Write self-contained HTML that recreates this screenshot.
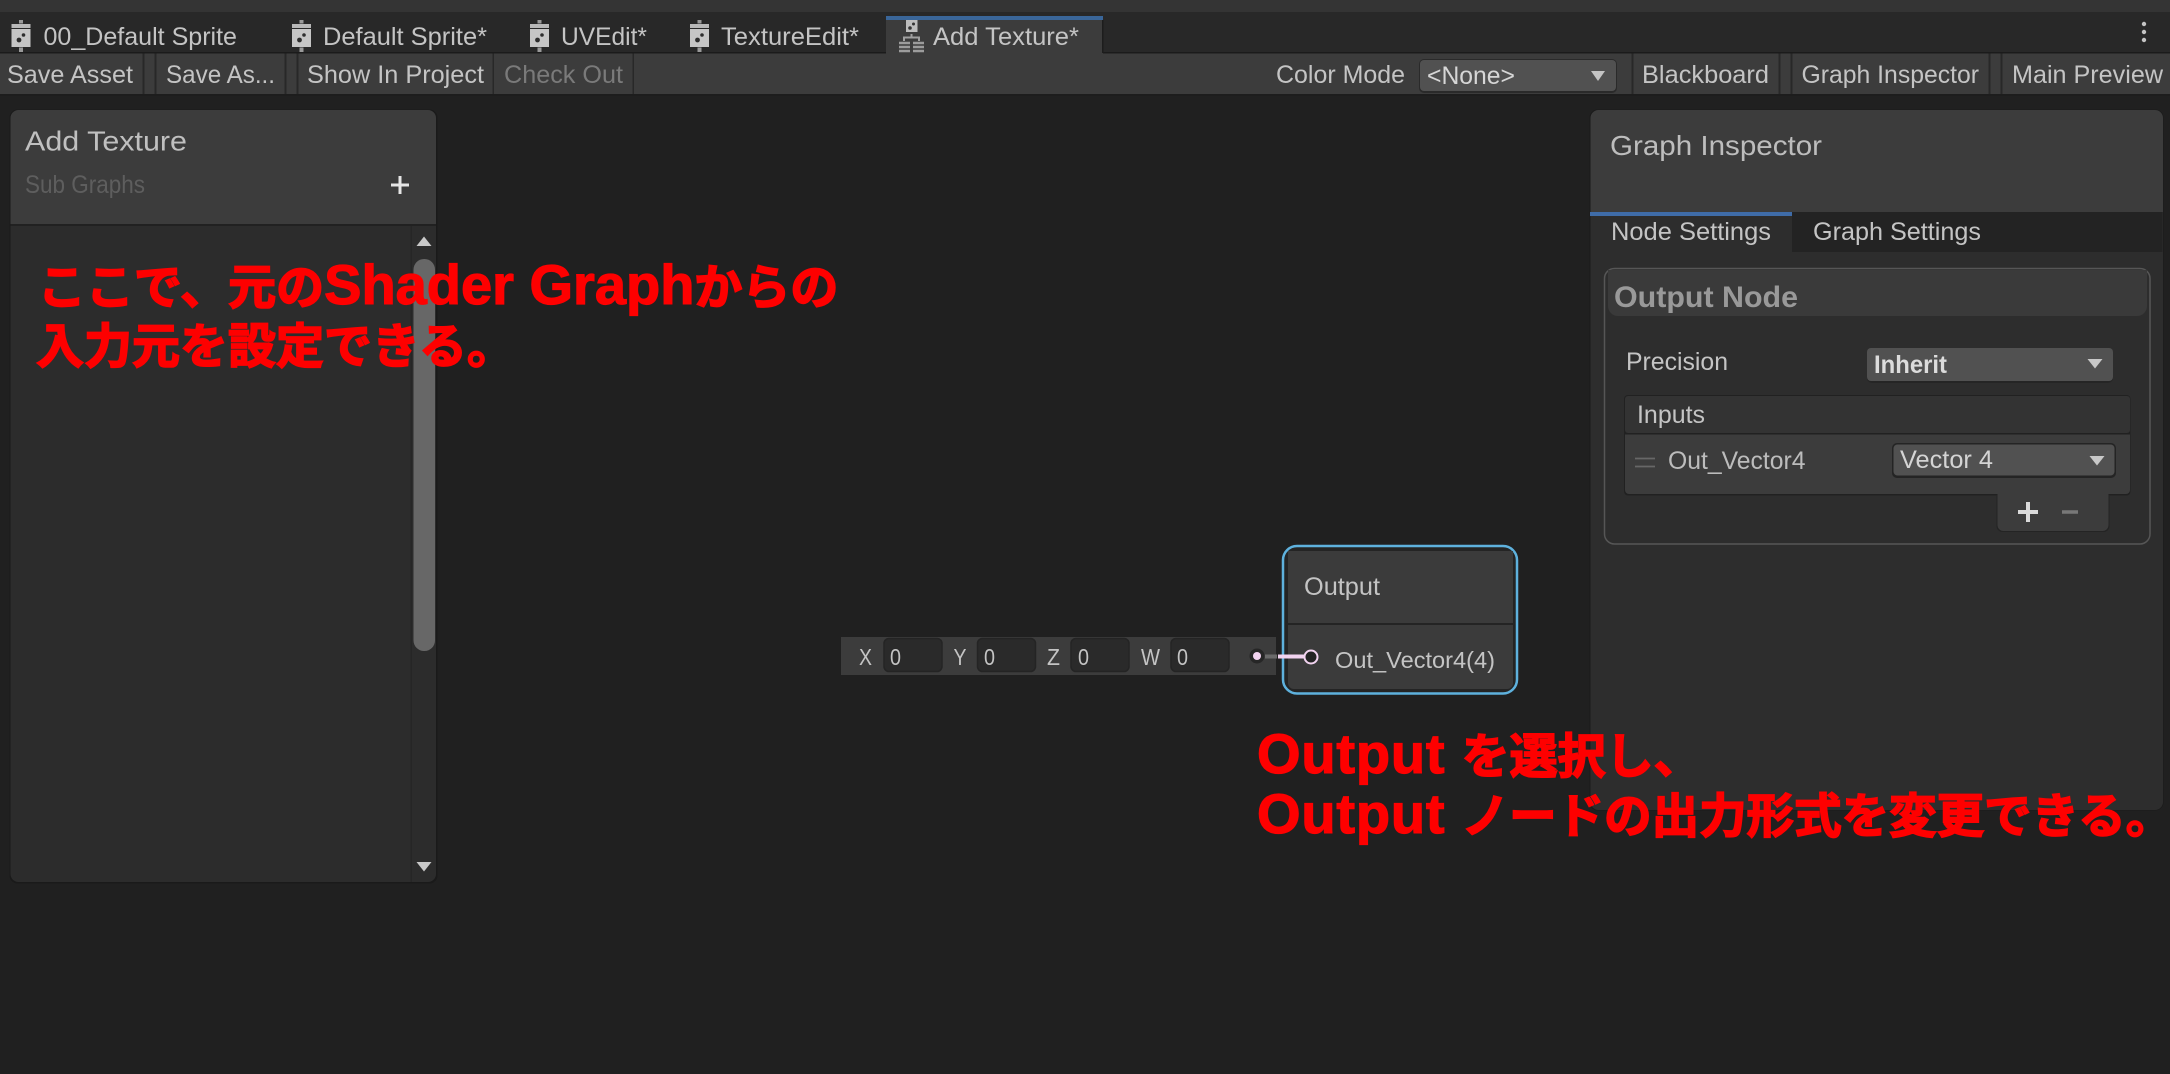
<!DOCTYPE html>
<html lang="ja"><head><meta charset="utf-8"><title>Add Texture</title>
<style>
html,body{margin:0;padding:0;background:#202020;width:2170px;height:1074px;overflow:hidden}
svg{display:block;position:absolute;left:0;top:0}
text{font-family:"Liberation Sans","Noto Sans CJK JP",sans-serif;fill:#c4c4c4}
.t{font-size:25px}
.h{font-size:28px}
.n{font-size:23px}
.r{font-size:48px;font-weight:700;fill:#fe0000;stroke:#fe0000;stroke-width:1.7px}
.l{font-size:56px;stroke-width:1.2px}
.o{letter-spacing:.8px}
</style></head><body>
<svg width="2170" height="1074" viewBox="0 0 2170 1074" xmlns="http://www.w3.org/2000/svg">
<defs>
<g id="ic">
<rect x="-2" y="0" width="4" height="3.5" fill="#9a9a9a"/>
<rect x="-9.5" y="4" width="19" height="4" fill="#b8b8b8"/>
<rect x="-9.5" y="9" width="19" height="18" fill="#c6c6c6"/>
<rect x="-2" y="27.5" width="4" height="4.5" fill="#9a9a9a"/>
<circle cx="2.5" cy="15" r="1.8" fill="#2e2e2e"/><circle cx="-2" cy="20" r="2.4" fill="#2e2e2e"/>
</g>
</defs>
<rect width="2170" height="1074" fill="#202020"/>
<!-- top strip -->
<rect width="2170" height="12" fill="#343434"/>
<rect y="12" width="2170" height="41" fill="#282828"/>
<rect y="52" width="2170" height="1.5" fill="#1b1b1b"/>
<!-- active tab -->
<rect x="886" y="16" width="217" height="38" fill="#3c3c3c"/>
<rect x="886" y="16" width="217" height="4" fill="#3a6699"/>
<rect x="1102" y="20" width="1.5" height="33" fill="#1d1d1d"/>
<use href="#ic" x="21" y="20"/><use href="#ic" x="301.5" y="20"/><use href="#ic" x="539.5" y="20"/><use href="#ic" x="699.5" y="20"/>
<!-- active tab icon -->
<rect x="906" y="20" width="11.5" height="12" fill="#bdbdbd"/>
<circle cx="913.5" cy="24" r="1.5" fill="#333"/><circle cx="910" cy="28" r="1.8" fill="#333"/>
<path d="M911.5 34v3M904 41v-3.5h15V41" fill="none" stroke="#a0a0a0" stroke-width="2"/>
<path d="M899 43h11M899 47h11M899 51h11M913 43h11M913 47h11M913 51h11" fill="none" stroke="#9c9c9c" stroke-width="2.6"/>
<g style="fill:#c8c8c8">
<text class="t" x="43.5" y="45" textLength="193.5" lengthAdjust="spacingAndGlyphs">00_Default Sprite</text>
<text class="t" x="323" y="45" textLength="164" lengthAdjust="spacingAndGlyphs">Default Sprite*</text>
<text class="t" x="561" y="45" textLength="86" lengthAdjust="spacingAndGlyphs">UVEdit*</text>
<text class="t" x="721" y="45" textLength="138" lengthAdjust="spacingAndGlyphs">TextureEdit*</text>
<text class="t" x="933" y="45" textLength="146" lengthAdjust="spacingAndGlyphs">Add Texture*</text>
</g>
<!-- three dots -->
<circle cx="2144" cy="24" r="2.2" fill="#c4c4c4"/><circle cx="2144" cy="32" r="2.2" fill="#c4c4c4"/><circle cx="2144" cy="40" r="2.2" fill="#c4c4c4"/>
<!-- toolbar -->
<rect y="53.5" width="2170" height="40.5" fill="#3c3c3c"/>
<rect y="94" width="2170" height="2" fill="#1d1d1d"/>
<g fill="#282828">
<rect x="142.5" y="53.5" width="2" height="40.5"/><rect x="154.5" y="53.5" width="2" height="40.5"/>
<rect x="284.5" y="53.5" width="2" height="40.5"/><rect x="296.5" y="53.5" width="2" height="40.5"/>
<rect x="492.5" y="53.5" width="1.5" height="40.5"/><rect x="632.5" y="53.5" width="1.5" height="40.5"/>
<rect x="1631.5" y="53.5" width="2" height="40.5"/><rect x="1778.5" y="53.5" width="2" height="40.5"/>
<rect x="1790.5" y="53.5" width="2" height="40.5"/><rect x="1988.5" y="53.5" width="2" height="40.5"/>
<rect x="2000.5" y="53.5" width="2" height="40.5"/>
</g>
<text class="t" x="7" y="83" textLength="126" lengthAdjust="spacingAndGlyphs">Save Asset</text>
<text class="t" x="166" y="83" textLength="109" lengthAdjust="spacingAndGlyphs">Save As...</text>
<text class="t" x="307" y="83" textLength="177" lengthAdjust="spacingAndGlyphs">Show In Project</text>
<text class="t" x="504" y="83" textLength="119" lengthAdjust="spacingAndGlyphs" style="fill:#7a7a7a">Check Out</text>
<text class="t" x="1276" y="83" textLength="129" lengthAdjust="spacingAndGlyphs">Color Mode</text>
<rect x="1419" y="59" width="198" height="34" rx="5" fill="#2a2a2a"/>
<rect x="1420" y="60" width="196" height="31" rx="4" fill="#515151"/>
<text class="t" x="1427" y="84" textLength="88" lengthAdjust="spacingAndGlyphs" style="fill:#d6d6d6">&lt;None&gt;</text>
<path d="M1591 71h14l-7 10z" fill="#c4c4c4"/>
<text class="t" x="1642" y="83" textLength="127" lengthAdjust="spacingAndGlyphs">Blackboard</text>
<text class="t" x="1801.5" y="83" textLength="177.5" lengthAdjust="spacingAndGlyphs">Graph Inspector</text>
<text class="t" x="2012" y="83" textLength="151" lengthAdjust="spacingAndGlyphs">Main Preview</text>
<!-- left panel -->
<rect x="9.5" y="109.5" width="428" height="774" rx="8" fill="#1a1a1a"/>
<path d="M10.500 224V118a8 8 0 0 1 8-8H428a8 8 0 0 1 8 8V224z" fill="#3c3c3c"/>
<rect x="10.5" y="224" width="425.5" height="2" fill="#212121"/>
<path d="M10.500 226H436V874a8 8 0 0 1-8 8H18.500a8 8 0 0 1-8-8z" fill="#2c2c2c"/>
<rect x="410.5" y="226" width="1.5" height="656" fill="#262626"/>
<rect x="413.5" y="259" width="21.5" height="392" rx="10.5" fill="#676767"/>
<path d="M416.500 246h15l-7.500-9.500z" fill="#c8c8c8"/>
<path d="M416.500 862h15l-7.500 9.500z" fill="#c8c8c8"/>
<text class="h" x="25" y="150.5" textLength="162" lengthAdjust="spacingAndGlyphs" style="fill:#c0c0c0">Add Texture</text>
<text class="t" x="25" y="193" textLength="120" lengthAdjust="spacingAndGlyphs" style="fill:#5e5e5e">Sub Graphs</text>
<path d="M391 185h18M400 176v18" stroke="#e6e6e6" stroke-width="3" fill="none"/>
<!-- inspector -->
<rect x="1589.5" y="109.5" width="574" height="701" rx="8" fill="#1a1a1a"/>
<path d="M1590.500 212V118a8 8 0 0 1 8-8H2155a8 8 0 0 1 8 8V212z" fill="#3c3c3c"/>
<path d="M1590.500 212H2163V802a8 8 0 0 1-8 8H1598.500a8 8 0 0 1-8-8z" fill="#2d2d2d"/>
<rect x="1792" y="212" width="370.5" height="40" fill="#232323"/>
<rect x="1590" y="212" width="202" height="4" fill="#3f6ca8"/>
<text class="h" x="1610" y="155" textLength="212" lengthAdjust="spacingAndGlyphs" style="fill:#bdbdbd">Graph Inspector</text>
<text class="t" x="1611" y="240" textLength="160" lengthAdjust="spacingAndGlyphs">Node Settings</text>
<text class="t" x="1813" y="240" textLength="168" lengthAdjust="spacingAndGlyphs">Graph Settings</text>
<!-- section -->
<rect x="1604.5" y="268.5" width="545.5" height="275.5" rx="10" fill="#2d2d2d" stroke="#565656" stroke-width="1.5"/>
<path d="M1608 270H2147V306a10 10 0 0 1-10 10H1618a10 10 0 0 1-10-10z" fill="#3a3a3a"/>
<text x="1614" y="307" textLength="184" lengthAdjust="spacingAndGlyphs" style="font-size:30px;font-weight:700;fill:#999">Output Node</text>
<text class="t" x="1626" y="370" textLength="102" lengthAdjust="spacingAndGlyphs">Precision</text>
<rect x="1867" y="348" width="246" height="35" rx="5" fill="#252525"/>
<rect x="1867" y="348" width="246" height="33" rx="4" fill="#515151"/>
<text x="1874" y="373" textLength="73" lengthAdjust="spacingAndGlyphs" style="font-size:25px;font-weight:700;fill:#dcdcdc">Inherit</text>
<path d="M2087.500 359h15l-7.500 9.500z" fill="#c8c8c8"/>
<!-- list -->
<rect x="1624" y="395" width="506.5" height="100.5" rx="4" fill="#212121"/>
<rect x="1625" y="396" width="505" height="37" rx="3" fill="#333"/>
<path d="M1625 434.500H2130V490a4 4 0 0 1-4 4H1629a4 4 0 0 1-4-4z" fill="#3c3c3c"/>
<text class="t" x="1637" y="423" textLength="68" lengthAdjust="spacingAndGlyphs">Inputs</text>
<path d="M1635 458.500h20M1635 466.500h20" stroke="#676767" stroke-width="1.8" fill="none"/>
<text class="t" x="1668" y="469" textLength="137.5" lengthAdjust="spacingAndGlyphs" style="fill:#bcbcbc">Out_Vector4</text>
<rect x="1892" y="443" width="224" height="35" rx="5" fill="#242424"/>
<rect x="1893.5" y="444.5" width="221" height="31" rx="4" fill="#515151"/>
<text class="t" x="1900" y="468" textLength="93" lengthAdjust="spacingAndGlyphs" style="fill:#d4d4d4">Vector 4</text>
<path d="M2089.500 456h15l-7.500 9.500z" fill="#c8c8c8"/>
<path d="M1996.500 495H2109.500V526a6 6 0 0 1-6 6H2002.500a6 6 0 0 1-6-6z" fill="#242424"/>
<path d="M1997.500 494H2108.500V525a6 6 0 0 1-6 6H2003.500a6 6 0 0 1-6-6z" fill="#3c3c3c"/>
<path d="M2018 512h20M2028 502v20" stroke="#dadada" stroke-width="4" fill="none"/>
<path d="M2062 512h16" stroke="#787878" stroke-width="3.5" fill="none"/>
<!-- property strip -->
<rect x="841" y="637" width="435" height="38" fill="#3c3c3c"/>
<g fill="#2a2a2a" stroke="#242424" stroke-width="1.5">
<rect x="884" y="638.5" width="58" height="33" rx="5"/><rect x="977.5" y="638.5" width="58" height="33" rx="5"/>
<rect x="1071" y="638.5" width="58" height="33" rx="5"/><rect x="1171" y="638.5" width="58" height="33" rx="5"/>
</g>
<g>
<text class="n" x="859" y="665" textLength="13" lengthAdjust="spacingAndGlyphs">X</text>
<text class="n" x="890" y="665" textLength="11" lengthAdjust="spacingAndGlyphs">0</text>
<text class="n" x="953.5" y="665" textLength="13" lengthAdjust="spacingAndGlyphs">Y</text>
<text class="n" x="984" y="665" textLength="11" lengthAdjust="spacingAndGlyphs">0</text>
<text class="n" x="1047" y="665" textLength="13" lengthAdjust="spacingAndGlyphs">Z</text>
<text class="n" x="1078" y="665" textLength="11" lengthAdjust="spacingAndGlyphs">0</text>
<text class="n" x="1141" y="665" textLength="19" lengthAdjust="spacingAndGlyphs">W</text>
<text class="n" x="1177" y="665" textLength="11" lengthAdjust="spacingAndGlyphs">0</text>
</g>
<circle cx="1257" cy="656" r="7.5" fill="#262626"/>
<circle cx="1257" cy="656" r="4" fill="#f2d3f0"/>
<rect x="1265" y="654.5" width="12" height="4" fill="#6a6a6a"/>
<!-- node -->
<rect x="1283" y="546" width="234" height="147.5" rx="14" fill="#242424" stroke="#5eb1dd" stroke-width="2.5"/>
<path d="M1288 551H1513V683a6 6 0 0 1-6 6H1294a6 6 0 0 1-6-6z" fill="#3b3b3b"/>
<rect x="1288" y="623" width="225" height="2" fill="#242424"/>
<text x="1304" y="595" textLength="76" lengthAdjust="spacingAndGlyphs" style="font-size:25px">Output</text>
<text class="n" x="1335" y="668" textLength="160" lengthAdjust="spacingAndGlyphs">Out_Vector4(4)</text>
<rect x="1278" y="654.5" width="26" height="4" fill="#f2d3f0"/>
<circle cx="1311" cy="657" r="6.5" fill="#232323" stroke="#f2d3f0" stroke-width="2"/>
<!-- red annotations -->
<text class="r" x="38" y="304">ここで、元の<tspan class="l">Shader Graph</tspan>からの</text>
<text class="r" x="36" y="363">入力元を設定できる。</text>
<text class="r" x="1257" y="773"><tspan class="l o">Output </tspan>を選択し、</text>
<text class="r" x="1257" y="833" style="font-size:47.5px"><tspan class="l o">Output </tspan>ノードの出力形式を変更できる。</text>
</svg>
</body></html>
